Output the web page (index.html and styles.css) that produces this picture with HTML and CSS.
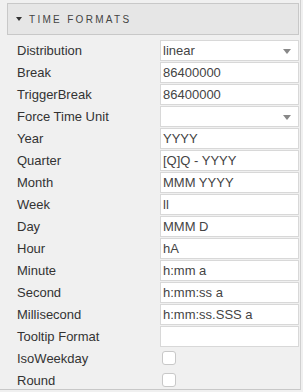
FILE: index.html
```html
<!DOCTYPE html>
<html lang="en">
<head>
    <meta charset="UTF-8">
    <title>Time Formats</title>
    <link rel="stylesheet" href="styles.css">
</head>
<body>
    <div class="panel">
        <div class="panel-header">
            <span class="caret"></span>
            <span class="title">Time Formats</span>
        </div>

        <div class="rows">
            <div class="row">
                <label>Distribution</label>
                <div class="field select">linear</div>
            </div>
            <div class="row">
                <label>Break</label>
                <div class="field">86400000</div>
            </div>
            <div class="row">
                <label>TriggerBreak</label>
                <div class="field">86400000</div>
            </div>
            <div class="row">
                <label>Force Time Unit</label>
                <div class="field select"></div>
            </div>
            <div class="row">
                <label>Year</label>
                <div class="field">YYYY</div>
            </div>
            <div class="row">
                <label>Quarter</label>
                <div class="field">[Q]Q - YYYY</div>
            </div>
            <div class="row">
                <label>Month</label>
                <div class="field">MMM YYYY</div>
            </div>
            <div class="row">
                <label>Week</label>
                <div class="field">ll</div>
            </div>
            <div class="row">
                <label>Day</label>
                <div class="field">MMM D</div>
            </div>
            <div class="row">
                <label>Hour</label>
                <div class="field">hA</div>
            </div>
            <div class="row">
                <label>Minute</label>
                <div class="field">h:mm a</div>
            </div>
            <div class="row">
                <label>Second</label>
                <div class="field">h:mm:ss a</div>
            </div>
            <div class="row">
                <label>Millisecond</label>
                <div class="field">h:mm:ss.SSS a</div>
            </div>
            <div class="row">
                <label>Tooltip Format</label>
                <div class="field"></div>
            </div>
            <div class="row">
                <label>IsoWeekday</label>
                <span class="check"></span>
            </div>
            <div class="row">
                <label>Round</label>
                <span class="check"></span>
            </div>
        </div>
    </div>
</body>
</html>
```

FILE: styles.css
```css
body {
    margin: 0;
    background-color: #f0f0f0;
    font-family: "Liberation Sans", Arial, sans-serif;
    font-size: 13px;
    color: #333;
}

.panel {
    width: 301px;
    height: 390px;
    border-right: 1px solid #d0d0d0;
    border-bottom: 1px solid #c8c8c8;
    padding: 3px 0 0 7px;
    box-sizing: border-box;
    overflow: hidden;
}

.panel-header {
    display: flex;
    align-items: center;
    height: 30px;
    width: 282px;
    background-color: #e6e6e6;
    border: 1px solid #c8c8c8;
    padding-left: 8px;
    box-sizing: content-box;
}

.caret {
    width: 0;
    height: 0;
    border-left: 3px solid transparent;
    border-right: 3px solid transparent;
    border-top: 4px solid #333;
    margin-right: 7px;
}

.title {
    font-size: 10px;
    letter-spacing: 2.3px;
    text-transform: uppercase;
    color: #444;
}

.rows {
    padding-top: 4px;
}

.row {
    display: flex;
    align-items: center;
    height: 22px;
}

.row label {
    width: 153px;
    padding-left: 10px;
    box-sizing: border-box;
}

.field {
    position: relative;
    width: 135px;
    height: 19px;
    line-height: 19px;
    background-color: #fff;
    border: 1px solid #d8d8d8;
    padding-left: 2px;
    box-sizing: content-box;
    color: #444;
}

.select:after {
    content: "";
    position: absolute;
    right: 7px;
    top: 8px;
    border-left: 4px solid transparent;
    border-right: 4px solid transparent;
    border-top: 5px solid #888;
}

.check {
    width: 12px;
    height: 12px;
    margin-left: 2px;
    background-color: #fff;
    border: 1px solid #c8c8c8;
    border-radius: 3px;
}
```
